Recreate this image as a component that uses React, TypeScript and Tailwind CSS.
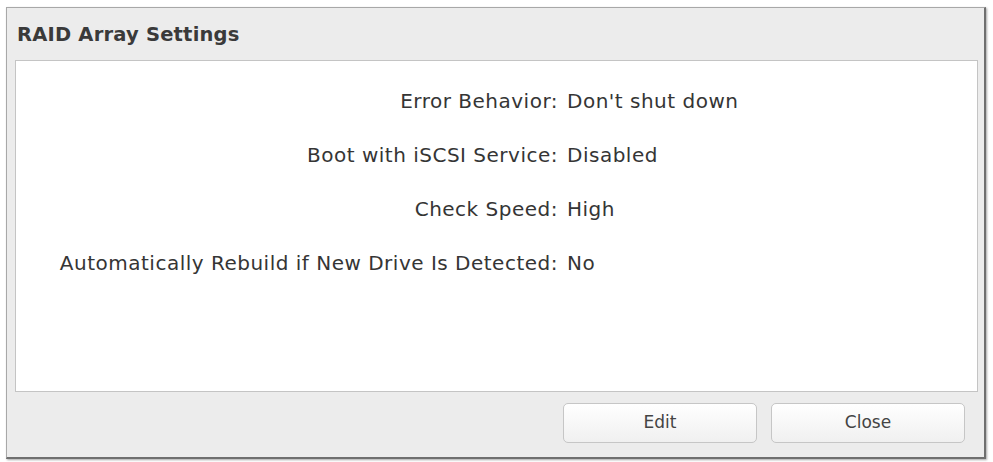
export default function App() {
  const rows: [string, string][] = [
    ["Error Behavior:", "Don't shut down"],
    ["Boot with iSCSI Service:", "Disabled"],
    ["Check Speed:", "High"],
    ["Automatically Rebuild if New Drive Is Detected:", "No"],
  ];

  return (
    <div className="w-[993px] h-[462px] bg-white pt-[7px] pl-[6px] font-['DejaVu_Sans','Liberation_Sans',sans-serif]">
      <div className="w-[980px] h-[452px] flex flex-col bg-[#ececec] border border-[#a8a8a8] border-r-[2px] border-b-[2px] border-r-[#6f6f6f] border-b-[#6f6f6f] shadow-[1px_1px_2px_rgba(0,0,0,0.35)]">
        {/* title */}
        <div className="h-[52px] flex items-center pl-[10px] pt-[2px] text-[19.5px] font-bold tracking-[0.2px] text-[#3a3a3a]">
          RAID Array Settings
        </div>

        {/* settings list */}
        <div className="ml-[8px] mr-[6px] h-[332px] bg-white border border-[#c4c4c4] pt-[13px]">
          {rows.map(([label, value]) => (
            <div key={label} className="h-[54px] flex items-center text-[20px] tracking-[0.5px] text-[#353535]">
              <div className="w-[542px] text-right">{label}</div>
              <div className="ml-[9px]">{value}</div>
            </div>
          ))}
        </div>

        {/* buttons */}
        <div className="flex-1 flex justify-end items-start pt-[11px] pr-[19px] gap-[14px]">
          <button className="w-[194px] h-[40px] rounded-[5px] border border-[#c6c6c6] bg-gradient-to-b from-white to-[#f0f0f0] text-[17px] text-[#444]">
            Edit
          </button>
          <button className="w-[194px] h-[40px] rounded-[5px] border border-[#c6c6c6] bg-gradient-to-b from-white to-[#f0f0f0] text-[17px] text-[#444]">
            Close
          </button>
        </div>
      </div>
    </div>
  );
}
